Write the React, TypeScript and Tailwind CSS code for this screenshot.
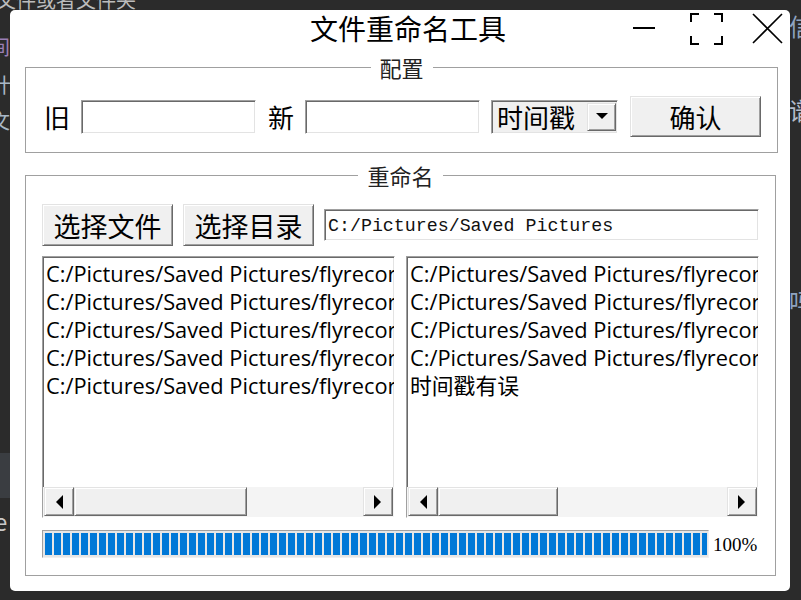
import React from 'react';

const cjk = '"Noto Sans CJK SC", sans-serif';
const listFont = '"Open Sans", "Noto Sans CJK SC", sans-serif';

const sunken =
  'border border-t-[#a0a0a0] border-l-[#a0a0a0] border-b-white border-r-white shadow-[inset_1px_1px_0_#696969,inset_-1px_-1px_0_#e3e3e3]';
const raised =
  'border border-t-[#e3e3e3] border-l-[#e3e3e3] border-b-[#696969] border-r-[#696969] shadow-[inset_1px_1px_0_#ffffff,inset_-1px_-1px_0_#a0a0a0] bg-[#f0f0f0]';

const path = 'C:/Pictures/Saved Pictures/flyrecor';
const rows = [path, path, path, path, path];

function Arrow({ dir }: { dir: 'left' | 'right' | 'down' }) {
  if (dir === 'down') {
    return (
      <svg width="12" height="7" viewBox="0 0 12 7">
        <path d="M0 0 L12 0 L6 6 Z" fill="#000" />
      </svg>
    );
  }
  return (
    <svg width="8" height="14" viewBox="0 0 8 14">
      <path d={dir === 'left' ? 'M8 0 L8 14 L1 7 Z' : 'M0 0 L0 14 L7 7 Z'} fill="#000" />
    </svg>
  );
}

function ListPane({ items, thumb }: { items: string[]; thumb: number }) {
  return (
    <div className={`flex h-[262px] w-[353px] flex-col bg-white ${sunken}`}>
      <div className="flex-1 overflow-hidden pl-[3px] pt-[3px]" style={{ fontFamily: listFont }}>
        {items.map((t, i) => (
          <div key={i} className="overflow-hidden whitespace-nowrap text-[21.8px] leading-[28px] text-black">
            {t}
          </div>
        ))}
      </div>
      {/* horizontal scrollbar */}
      <div className="flex h-[30px] bg-[#f4f4f4] px-px pb-px">
        <div className={`flex w-[30px] items-center justify-center ${raised}`}>
          <Arrow dir="left" />
        </div>
        <div className={raised} style={{ width: thumb }} />
        <div className="flex-1" />
        <div className={`flex w-[30px] items-center justify-center ${raised}`}>
          <Arrow dir="right" />
        </div>
      </div>
    </div>
  );
}

function Group({ title, children }: { title: string; children: React.ReactNode }) {
  return (
    <fieldset className="mx-[15px] border border-[#a0a0a0] px-[16px]">
      <legend
        className="mx-auto px-[9px] text-[22px] leading-[20px] text-[#222]"
        style={{ fontFamily: cjk }}
      >
        {title}
      </legend>
      {children}
    </fieldset>
  );
}

export default function App() {
  return (
    <div className="relative h-[600px] w-[801px] overflow-hidden bg-[#2b2b2b]" style={{ fontFamily: cjk }}>
      {/* desktop fragments behind the window */}
      <div className="absolute left-[-4px] top-[-15px] text-[20px] text-[#bcbcbc]">文件或者文件夹</div>
      <div className="absolute left-[-10px] top-[32px] text-[20px] text-[#9a7fb5]">间</div>
      <div className="absolute left-[-9px] top-[70px] text-[20px] text-[#a9b7c6]">计</div>
      <div className="absolute left-[-10px] top-[106px] text-[20px] text-[#a9b7c6]">文</div>
      <div className="absolute left-0 top-[453px] h-[45px] w-[12px] bg-[#3a3d41]" />
      <div className="absolute left-[-6px] top-[503px] text-[24px] text-[#c8c8c8]">e</div>
      <div className="absolute left-[789px] top-[8px] text-[24px] text-[#8fa3c0]">信</div>
      <div className="absolute left-[789px] top-[92px] text-[24px] text-[#b4bccb]">谱</div>
      <div className="absolute left-[789px] top-[283px] text-[24px] text-[#8fa3c0]">吗</div>

      {/* window */}
      <div className="absolute left-[10px] top-[10px] flex h-[581px] w-[780px] flex-col rounded-[5px] bg-white">
        {/* title bar */}
        <div className="flex h-[47px] items-start">
          <span className="ml-[300px] text-[28px] leading-[36px] text-black">文件重命名工具</span>
          <div className="ml-auto mr-[7px] mt-[3px] flex items-start">
            <svg width="22" height="32" viewBox="0 0 22 32">
              <path d="M0 15 H22" stroke="#000" strokeWidth="2" />
            </svg>
            <svg className="ml-[35px]" width="33" height="32" viewBox="0 0 33 32">
              <path
                d="M1 9 V1 H9 M24 1 H32 V9 M32 23 V31 H24 M9 31 H1 V23"
                stroke="#000"
                strokeWidth="2"
                fill="none"
              />
            </svg>
            <svg className="ml-[29px]" width="31" height="32" viewBox="0 0 31 32">
              <path d="M1 1 L30 30 M30 1 L1 30" stroke="#000" strokeWidth="1.6" />
            </svg>
          </div>
        </div>

        {/* 配置 */}
        <Group title="配置">
          <div className="mb-[15px] mt-[19px] flex h-[41px] items-center pl-[2px] text-[26px] text-black">
            <span className="leading-none">旧</span>
            <div className={`ml-[11px] h-[34px] w-[175px] bg-white ${sunken}`} />
            <span className="ml-[12px] leading-none">新</span>
            <div className={`ml-[11px] h-[34px] w-[175px] bg-white ${sunken}`} />
            <div className={`ml-[11px] flex h-[34px] w-[127px] items-center bg-[#f0f0f0] pl-[5px] pr-px ${sunken}`}>
              <span className="leading-none">时间戳</span>
              <div className={`ml-auto flex h-[28px] w-[29px] items-center justify-center ${raised}`}>
                <Arrow dir="down" />
              </div>
            </div>
            <button className={`ml-[12px] h-[41px] w-[131px] leading-none ${raised}`}>确认</button>
          </div>
        </Group>

        <div className="h-[12px]" />

        {/* 重命名 */}
        <Group title="重命名">
          <div className="mt-[19px] flex items-center text-[27px] text-black">
            <button className={`h-[42px] w-[131px] leading-none ${raised}`}>选择文件</button>
            <button className={`ml-[10px] h-[42px] w-[131px] leading-none ${raised}`}>选择目录</button>
            <div
              className={`ml-[10px] flex h-[32px] w-[435px] items-center bg-white pl-[3px] pt-[3px] text-[18.3px] text-[#111] ${sunken}`}
              style={{ fontFamily: '"Liberation Mono", monospace' }}
            >
              C:/Pictures/Saved Pictures
            </div>
          </div>

          <div className="mt-[10px] flex gap-[11px]">
            <ListPane items={rows} thumb={173} />
            <ListPane items={[...rows.slice(0, 4), '时间戳有误']} thumb={120} />
          </div>

          <div className="mb-[17px] mt-[12px] flex items-center">
            <div className="h-[28px] w-[667px] border border-t-[#a0a0a0] border-l-[#a0a0a0] border-b-[#f0f0f0] border-r-[#f0f0f0] bg-[#e6e6e6] p-[2px]">
              <div className="h-full w-[662px] bg-[repeating-linear-gradient(to_right,#0078d7_0px,#0078d7_7px,#e6e6e6_7px,#e6e6e6_9px)]" />
            </div>
            <span
              className="ml-[4px] text-[19px] leading-none text-black"
              style={{ fontFamily: '"Liberation Serif", serif' }}
            >
              100%
            </span>
          </div>
        </Group>
      </div>
    </div>
  );
}
